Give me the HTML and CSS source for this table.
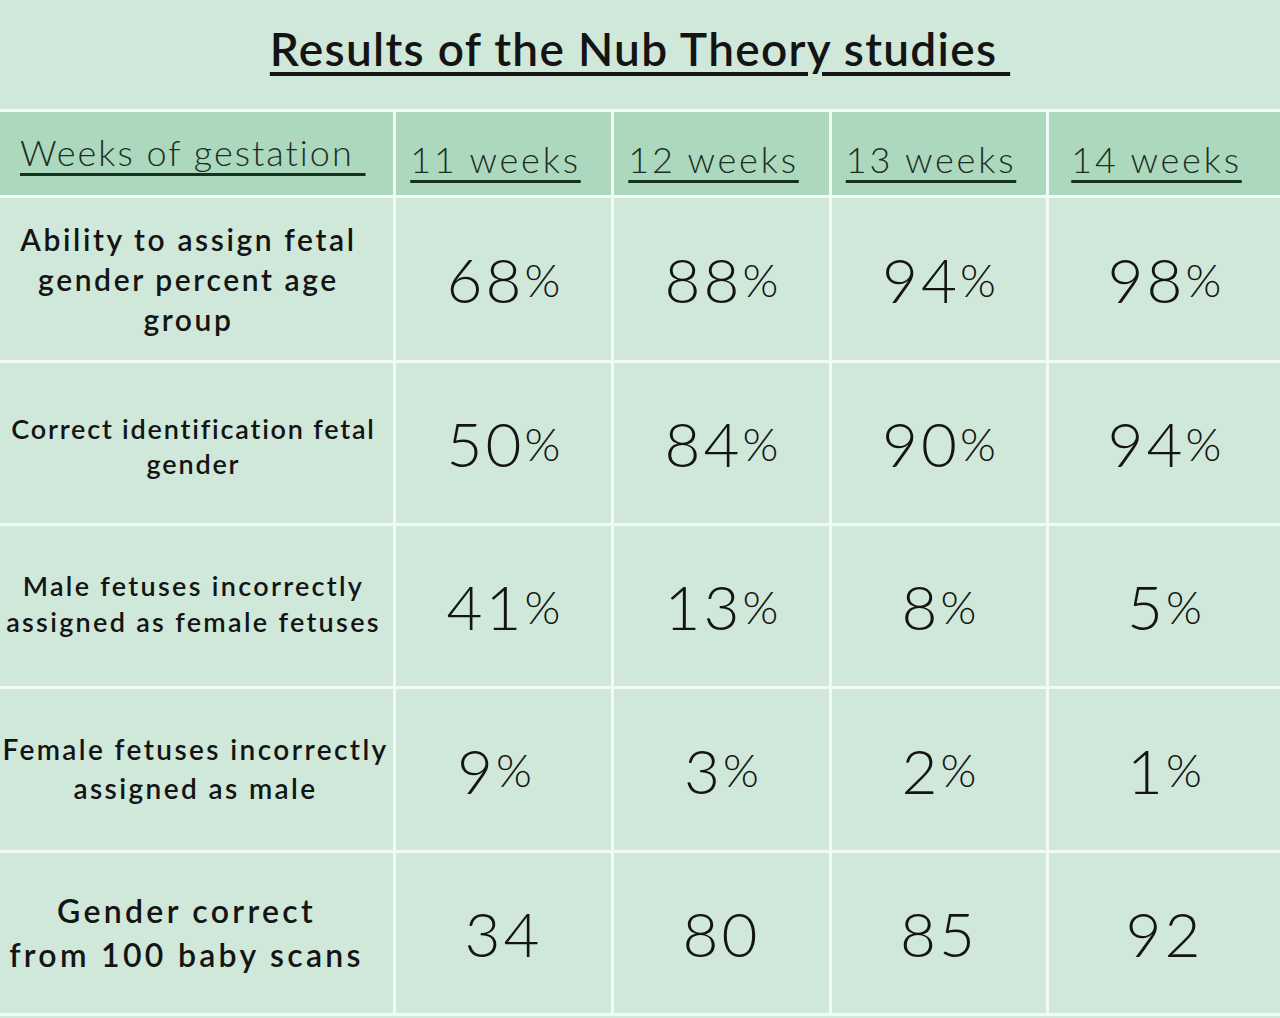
FILE: index.html
```html
<!DOCTYPE html>
<html lang="en">
<head>
<meta charset="utf-8">
<title>Results of the Nub Theory studies</title>
<link rel="stylesheet" href="styles.css">
</head>
<body>
<header class="title-block">
  <h1 class="title">Results of the Nub Theory studies&nbsp;</h1>
</header>
<div class="table">
  <div class="cell head head-label"><span class="ul">Weeks of gestation&nbsp;</span></div>
  <div class="cell head week"><span class="ul">11 weeks</span></div>
  <div class="cell head week"><span class="ul">12 weeks</span></div>
  <div class="cell head week"><span class="ul">13 weeks</span></div>
  <div class="cell head week"><span class="ul">14 weeks</span></div>

  <div class="cell label label-a">Ability to assign fetal<br>gender percent age<br>group</div>
  <div class="cell num">68<span class="pct">%</span></div>
  <div class="cell num">88<span class="pct">%</span></div>
  <div class="cell num">94<span class="pct">%</span></div>
  <div class="cell num">98<span class="pct">%</span></div>

  <div class="cell label label-b">Correct identification fetal<br>gender</div>
  <div class="cell num">50<span class="pct">%</span></div>
  <div class="cell num">84<span class="pct">%</span></div>
  <div class="cell num">90<span class="pct">%</span></div>
  <div class="cell num">94<span class="pct">%</span></div>

  <div class="cell label label-c">Male fetuses incorrectly<br>assigned as female fetuses</div>
  <div class="cell num">41<span class="pct">%</span></div>
  <div class="cell num">13<span class="pct">%</span></div>
  <div class="cell num">8<span class="pct">%</span></div>
  <div class="cell num">5<span class="pct">%</span></div>

  <div class="cell label label-d">Female fetuses incorrectly<br>assigned as male</div>
  <div class="cell num num-shift">9<span class="pct">%</span></div>
  <div class="cell num">3<span class="pct">%</span></div>
  <div class="cell num">2<span class="pct">%</span></div>
  <div class="cell num">1<span class="pct">%</span></div>

  <div class="cell label label-e">Gender correct<br>from 100 baby scans</div>
  <div class="cell num">34</div>
  <div class="cell num">80</div>
  <div class="cell num">85</div>
  <div class="cell num">92</div>
</div>
</body>
</html>
```

FILE: styles.css
```css
html, body {
  margin: 0;
  padding: 0;
}
body {
  background: #cfe8d9;
  color: #141414;
  font-family: "Lato", "Open Sans", sans-serif;
  width: 1280px;
  height: 1018px;
  overflow: hidden;
}
.title-block {
  height: 109px;
  display: flex;
  justify-content: center;
}
.title {
  margin: 20px 0 0 0;
  font-size: 46px;
  font-weight: 600;
  line-height: 58px;
  letter-spacing: 1.3px;
  text-decoration: underline;
  text-decoration-thickness: 4px;
  text-underline-offset: 6px;
  padding-left: 0;
}
.table {
  display: grid;
  grid-template-columns: 393px 215px 215px 214px 231px;
  grid-template-rows: 83px 162px 160px 160px 161px 160px;
  gap: 3px;
  padding: 3px 0;
  background: #f2faf6;
}
.cell {
  background: #cfe8d9;
  display: flex;
  align-items: center;
  justify-content: center;
  text-align: center;
}
.head {
  background: #acd8bd;
  font-weight: 300;
  font-size: 36px;
  letter-spacing: 2px;
  color: #1d2e24;
}
.head .ul {
  text-decoration: underline;
  text-decoration-thickness: 3px;
  text-underline-offset: 7px;
  text-decoration-color: #15301f;
}
.head-label {
  justify-content: flex-start;
  padding: 0 0 4px 20px;
}
.week {
  letter-spacing: 2.8px;
  padding: 10px 16px 0 0;
}
.label {
  font-weight: 600;
  font-size: 30px;
  line-height: 40px;
  letter-spacing: 2.6px;
  padding-right: 16px;
}
.label-b { font-size: 27px; line-height: 35px; letter-spacing: 1.8px; padding-top: 6px; padding-right: 6px; }
.label-c { font-size: 27px; line-height: 36px; letter-spacing: 2.3px; padding-bottom: 4px; padding-right: 6px; }
.label-d { font-size: 28px; line-height: 39px; letter-spacing: 2.4px; padding-bottom: 2px; padding-right: 2px; }
.label-e { font-size: 32px; line-height: 44px; letter-spacing: 3.3px; padding-right: 20px; }
.num {
  font-weight: 300;
  font-size: 62px;
  letter-spacing: 3px;
}
.num-shift {
  padding-right: 18px;
}
.pct {
  font-size: 46px;
  letter-spacing: 0;
}
```
